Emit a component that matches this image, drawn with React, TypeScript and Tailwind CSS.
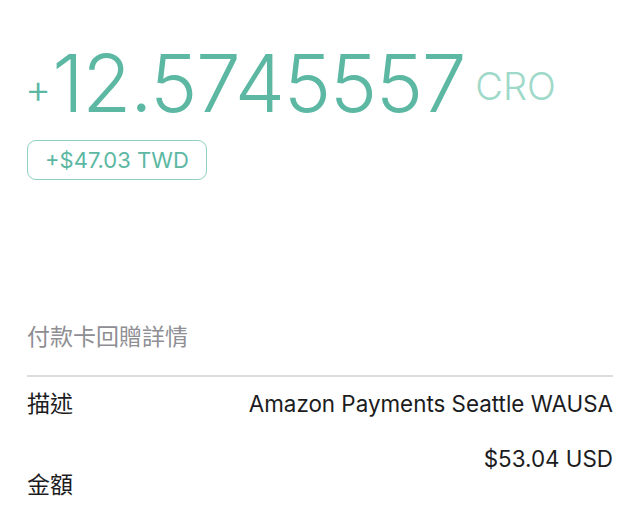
import React from 'react';

const rows = [
  { label: "描述", value: "Amazon Payments Seattle WAUSA" },
];

const App = () => {
  return (
    <div className="w-[640px] h-[513px] bg-white overflow-hidden font-['Inter','Noto_Sans_CJK_TC',sans-serif]">
      <div className="px-[27px] pt-[35px]">
        {/* Amount */}
        <div className="flex items-center text-[#5cb8a3] h-[95px]">
          <span className="text-[40px] font-light mt-[12px] -ml-[2px] mr-[1px] leading-none">+</span>
          <span className="text-[80px] font-light leading-none tracking-[-1.4px]">12.5745557</span>
          <span className="text-[38px] font-light leading-none text-[#9fd9c9] ml-[10px] mt-[6px]">CRO</span>
        </div>

        {/* Fiat badge */}
        <div className="mt-[10px] inline-flex items-center h-[40px] px-[17px] rounded-[9px] border border-[#8fd0c0] text-[22px] text-[#5cb8a3] leading-none">
          +$47.03 TWD
        </div>

        {/* Rebate details */}
        <div className="mt-[146px] text-[23px] text-[#8e8e93] leading-none">付款卡回贈詳情</div>
        <div className="mt-[26px] h-[2px] bg-[#dcdcdc]" />

        {rows.map((row) => (
          <div key={row.label} className="flex justify-between items-center mt-[16px] text-[22.4px] text-[#1c1c1e] leading-none">
            <span className="text-[23px]">{row.label}</span>
            <span>{row.value}</span>
          </div>
        ))}

        <div className="mt-[32px] text-[22.4px] text-[#1c1c1e] leading-none">
          <div className="text-right">$53.04 USD</div>
          <div className="mt-[4px] text-[23px]">金額</div>
        </div>
      </div>
    </div>
  );
};

export default App;
